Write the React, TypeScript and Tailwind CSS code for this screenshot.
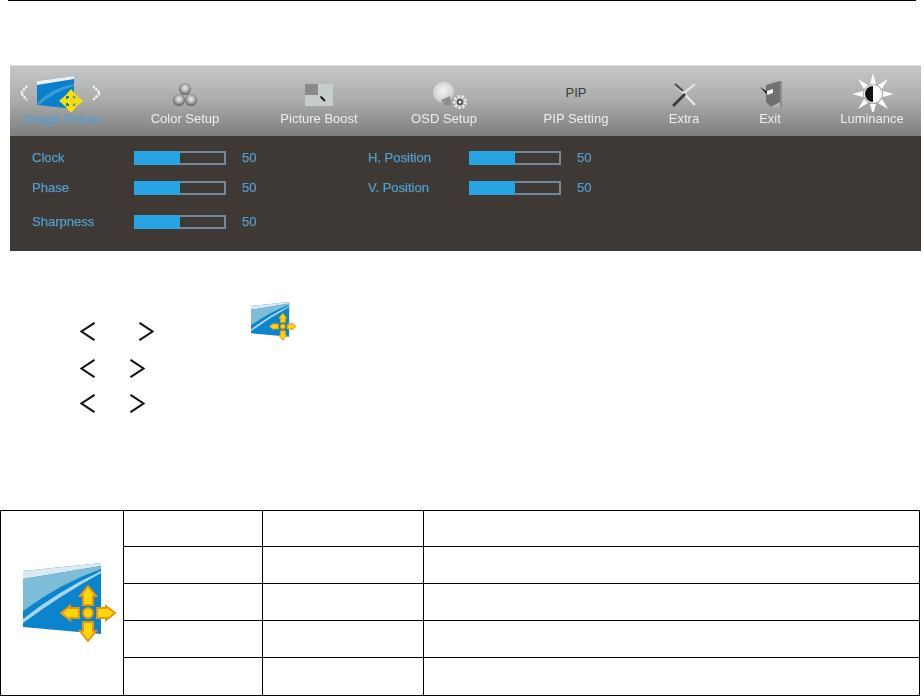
import type { ReactNode } from "react";

const Chevron = ({ dir }: { dir: "left" | "right" }) => (
  <svg width="15" height="19" viewBox="0 0 15 19" className="block shrink-0">
    <polyline
      points={dir === "left" ? "14.5,0.8 1.5,9.5 14.5,18.2" : "0.5,0.8 13.5,9.5 0.5,18.2"}
      fill="none"
      stroke="#111"
      strokeWidth="2"
    />
  </svg>
);

const DisplayIcon = ({ className }: { className: string }) => (
  <svg viewBox="0 0 94 80" className={`blur-[0.3px] ${className}`}>
    <polygon points="0,8 78,0 78,71 0,64" fill="#0a84cc" />
    <polygon points="0,8 78,0 78,3 0,16" fill="#dce7f0" />
    <path d="M0 16 L78 3 L78 6 Q38 20 0 48 Z" fill="#7dbdd8" />
    <path d="M0 56 Q35 28 78 8 L78 10 Q38 32 0 60 Z" fill="#a9d5ea" />
    <g fill="#ffd60a" stroke="#e8950c" strokeWidth="2">
      <polygon points="65,23 73,33 70,33 70,42 60,42 60,33 57,33" />
      <polygon points="65,78 73,68 70,68 70,59 60,59 60,68 57,68" />
      <polygon points="38,50 47,43 47,45 56,45 56,55 47,55 47,57" />
      <polygon points="92,50 83,43 83,45 74,45 74,55 83,55 83,57" />
      <circle cx="65" cy="50" r="5" />
    </g>
  </svg>
);

const ImageSetupIcon = () => (
  <svg width="82" height="40" viewBox="0 0 82 40" className="blur-[0.4px]">
    <g fill="none" stroke="#f4f4f4" strokeWidth="2.4" strokeDasharray="2.4 1">
      <polyline points="7,14 1,21 7,28" />
      <polyline points="73,14 80,21 73,28" />
    </g>
    <polygon points="17,9 54,4 54,37 17,33" fill="#0a80cc" />
    <polygon points="17,9 54,4 54,7 17,13" fill="#eef1f3" />
    <path d="M17 31 Q32 16 54 12 L54 14 Q34 20 19 33 Z" fill="#3d9ad6" />
    <g fill="#ffdf00">
      <polygon points="51,17 57,24 53,24 53,27 49,27 49,24 45,24" />
      <polygon points="51,41 57,34 53,34 53,31 49,31 49,34 45,34" />
      <polygon points="39,29 46,23 46,27 49,27 49,31 46,31 46,35" />
      <polygon points="63,29 56,23 56,27 53,27 53,31 56,31 56,35" />
      <rect x="48" y="26" width="6" height="6" />
    </g>
  </svg>
);

const ColorIcon = () => (
  <svg width="48" height="40" viewBox="0 0 48 40" className="blur-[0.3px]">
    <defs>
      <radialGradient id="ball" cx="0.5" cy="0.42" r="0.6">
        <stop offset="0" stopColor="#f2f2f2" />
        <stop offset="0.55" stopColor="#a8a8a8" />
        <stop offset="1" stopColor="#505050" />
      </radialGradient>
    </defs>
    <circle cx="24" cy="17" r="6" fill="url(#ball)" />
    <circle cx="18" cy="28" r="6" fill="url(#ball)" />
    <circle cx="30" cy="28" r="6" fill="url(#ball)" />
  </svg>
);

const PictureIcon = () => (
  <svg width="48" height="40" viewBox="0 0 48 40" className="blur-[0.3px]">
    <rect x="10" y="12" width="28" height="22" fill="#c6cecb" />
    <rect x="10" y="12" width="13" height="11" fill="#8b8a89" />
    <line x1="25.5" y1="24.5" x2="30" y2="29" stroke="#1c1c1c" strokeWidth="2" />
  </svg>
);

const OsdIcon = () => (
  <svg width="48" height="40" viewBox="0 0 48 40" className="blur-[0.5px]">
    <defs>
      <radialGradient id="globe" cx="0.45" cy="0.4" r="0.65">
        <stop offset="0" stopColor="#f5f5f5" />
        <stop offset="0.7" stopColor="#d2d2d2" />
        <stop offset="1" stopColor="#8f8f8f" />
      </radialGradient>
    </defs>
    <ellipse cx="24" cy="21" rx="11" ry="11" fill="url(#globe)" />
    <path d="M21 28 L30 24 L31 33 L25 33 Z" fill="#8c8e8d" />
    <circle cx="40" cy="30" r="5.5" fill="none" stroke="#e8e8e8" strokeWidth="3.2" strokeDasharray="2.4 1.4" />
    <circle cx="40" cy="30" r="3" fill="#4a4a4a" />
    <circle cx="40" cy="30" r="1.5" fill="#eee" />
  </svg>
);

const ExtraIcon = () => (
  <svg width="48" height="40" viewBox="0 0 48 40" className="blur-[0.4px]">
    <path d="M15 12 L35 33" stroke="#e6e8e7" strokeWidth="2.4" />
    <path d="M35 12 L24 21" stroke="#dfe1e0" strokeWidth="2.4" />
    <path d="M13 34 L25 22" stroke="#3c3c3c" strokeWidth="2.8" />
    <path d="M15 12 L23 19" stroke="#4a4a4a" strokeWidth="2.2" />
  </svg>
);

const ExitIcon = () => (
  <svg width="48" height="40" viewBox="0 0 48 40" className="blur-[0.4px]">
    <rect x="24" y="9" width="12" height="26" fill="#b4b6b5" />
    <polygon points="20,13 34,9 34,30 25,35 20,30" fill="#6f7170" />
    <polygon points="14,15 21,19 27,17 27,21 21,23" fill="#f1f1f1" />
    <polygon points="14,15 21,19 21,23" fill="#2d2d2d" />
    <rect x="34" y="9" width="2" height="26" fill="#8d8f8e" />
  </svg>
);

const LuminanceIcon = () => (
  <svg width="48" height="40" viewBox="0 0 48 40" className="blur-[0.4px]">
    <g fill="#fbfbfb">
      <polygon points="25,1 28,12 22,12" />
      <polygon points="25,43 28,32 22,32" />
      <polygon points="4,22 15,19 15,25" />
      <polygon points="46,22 35,19 35,25" />
      <polygon points="10,7 20,13 16,17" />
      <polygon points="40,7 30,13 34,17" />
      <polygon points="10,37 20,31 16,27" />
      <polygon points="40,37 30,31 34,27" />
    </g>
    <circle cx="25" cy="22" r="9" fill="#fbfbfb" />
    <path d="M25 14 A8 8 0 0 0 25 30 Z" fill="#111" />
  </svg>
);

type NavItem = { label: string; width: string; icon: ReactNode };

const navItems: NavItem[] = [
  { label: "Color Setup", width: "w-[146px]", icon: <ColorIcon /> },
  { label: "Picture Boost", width: "w-[122px]", icon: <PictureIcon /> },
  { label: "OSD Setup", width: "w-[128px]", icon: <OsdIcon /> },
  {
    label: "PIP Setting",
    width: "w-[136px]",
    icon: <span className="text-[13px] leading-none text-[#3b3d3c]">PIP</span>,
  },
  { label: "Extra", width: "w-[80px]", icon: <ExtraIcon /> },
  { label: "Exit", width: "w-[92px]", icon: <ExitIcon /> },
  { label: "Luminance", width: "ml-[24px] w-[64px]", icon: <LuminanceIcon /> },
];

const Slider = ({ label, labelWidth, mt }: { label: string; labelWidth: string; mt: string }) => (
  <div className={`flex h-[14px] items-center text-[13px] text-[#509dcb] [-webkit-text-stroke:0.25px_#509dcb] ${mt}`}>
    <span className={`${labelWidth} shrink-0 whitespace-nowrap blur-[0.3px]`}>{label}</span>
    <div className="h-[14px] w-[92px] shrink-0 border-2 border-[#71899a]">
      <div className="-my-[2px] -ml-[2px] h-[14px] w-[46px] bg-[#29a4e2]" />
    </div>
    <span className="ml-[16px] blur-[0.3px]">50</span>
  </div>
);

export default function App() {
  return (
    <div className="min-h-[696px] bg-white font-['Liberation_Sans',Arial,sans-serif]">
      <div className="mx-2 h-px bg-black" />

      <div className="ml-[10px] mt-[64px] w-[911px] border-t border-[#dcdddc]">
        <div className="flex h-[70px] bg-gradient-to-b from-[#c6c8c7] via-[#a9acab] to-[#7d7f7e] pt-[6px]">
          <div className="flex w-[102px] flex-col items-center">
            <div className="flex h-[40px] items-center">
              <ImageSetupIcon />
            </div>
            <span className="whitespace-nowrap text-[12.5px] font-bold leading-[14px] text-[#5d9ccb] blur-[0.6px]">
              Image Setup
            </span>
          </div>
          {navItems.map((item) => (
            <div key={item.label} className={`flex flex-col items-center ${item.width}`}>
              <div className="flex h-[40px] items-center justify-center">{item.icon}</div>
              <span className="whitespace-nowrap text-[13px] leading-[14px] text-[#ececec] blur-[0.2px]">
                {item.label}
              </span>
            </div>
          ))}
        </div>

        <div className="flex h-[115px] bg-[#3f3936] pl-[22px]">
          <div className="w-[336px]">
            <Slider label="Clock" labelWidth="w-[102px]" mt="mt-[15px]" />
            <Slider label="Phase" labelWidth="w-[102px]" mt="mt-[16px]" />
            <Slider label="Sharpness" labelWidth="w-[102px]" mt="mt-[20px]" />
          </div>
          <div>
            <Slider label="H. Position" labelWidth="w-[101px]" mt="mt-[15px]" />
            <Slider label="V. Position" labelWidth="w-[101px]" mt="mt-[16px]" />
          </div>
        </div>
      </div>

      <div className="ml-[80px] mt-[51px] flex h-[39px] items-start">
        <div className="mt-[20px]">
          <Chevron dir="left" />
        </div>
        <div className="ml-[44px] mt-[20px]">
          <Chevron dir="right" />
        </div>
        <DisplayIcon className="ml-[97px] w-[46px] shrink-0" />
      </div>
      <div className="ml-[80px] mt-[18px] flex gap-[35px]">
        <Chevron dir="left" />
        <Chevron dir="right" />
      </div>
      <div className="ml-[80px] mt-[16px] flex gap-[35px]">
        <Chevron dir="left" />
        <Chevron dir="right" />
      </div>

      <table className="mt-[97px] w-[920px] table-fixed border-collapse">
        <colgroup>
          <col className="w-[123px]" />
          <col className="w-[139px]" />
          <col className="w-[161px]" />
          <col />
        </colgroup>
        <tbody>
          {[36, 37, 37, 37, 38].map((height, i) => (
            <tr key={i} style={{ height }}>
              {i === 0 && (
                <td rowSpan={5} className="border border-black p-0 align-top">
                  <DisplayIcon className="ml-[22px] mt-[52px] w-[94px]" />
                </td>
              )}
              <td className="border border-black p-0" />
              <td className="border border-black p-0" />
              <td className="border border-black p-0" />
            </tr>
          ))}
        </tbody>
      </table>
    </div>
  );
}
